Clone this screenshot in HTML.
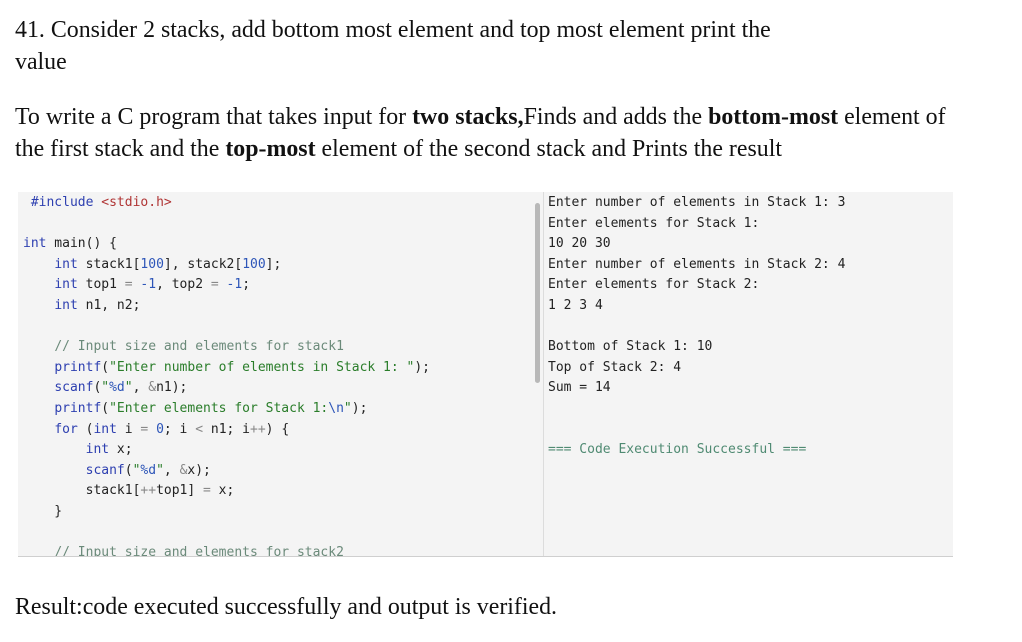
<!DOCTYPE html>
<html><head><meta charset="utf-8"><style>
body{margin:0;width:1022px;height:642px;background:#fff;overflow:hidden;position:relative;font-family:"Liberation Serif",serif;color:#111}
.t{position:absolute;left:15px;font-size:23.9px;line-height:32px;white-space:nowrap}
.panel{position:absolute;left:18px;top:192px;width:935px;height:364px;background:#f4f4f4;border-bottom:1px solid #cfcfcf;overflow:hidden}
.code{position:absolute;left:5px;top:1px;font-family:"DejaVu Sans Mono","Liberation Mono",monospace;font-size:13px;line-height:20.6px;white-space:pre;color:#222}
.out{position:absolute;left:530px;top:1px;font-family:"DejaVu Sans Mono","Liberation Mono",monospace;font-size:13px;line-height:20.6px;white-space:pre;color:#222}
.div{position:absolute;left:525px;top:0;width:1px;height:364px;background:#dcdcdc}
.sb{position:absolute;left:517px;top:11px;width:5px;height:180px;background:#b8b8b8;border-radius:3px}
.k{color:#2d3fb0}.s{color:#2a7d2a}.c{color:#6b8a7a}.n{color:#2d55b8}.p{color:#b03535}.o{color:#888}
.g{color:#4f8a72}
</style></head><body>
<div class="t" style="top:14px">41. Consider 2 stacks, add bottom most element and top most element print the</div>
<div class="t" style="top:46px">value</div>
<div class="t" style="top:101px">To write a C program that takes input for <b>two stacks,</b>Finds and adds the <b>bottom-most</b> element of</div>
<div class="t" style="top:133px">the first stack and the <b>top-most</b> element of the second stack and Prints the result</div>
<div class="panel">
<div class="code"> <span class="k">#include</span> <span class="p">&lt;stdio.h&gt;</span>

<span class="k">int</span> main() {
    <span class="k">int</span> stack1[<span class="n">100</span>], stack2[<span class="n">100</span>];
    <span class="k">int</span> top1 <span class="o">=</span> <span class="n">-1</span>, top2 <span class="o">=</span> <span class="n">-1</span>;
    <span class="k">int</span> n1, n2;

    <span class="c">// Input size and elements for stack1</span>
    <span class="k">printf</span>(<span class="s">"Enter number of elements in Stack 1: "</span>);
    <span class="k">scanf</span>(<span class="s">"<span class="n">%d</span>"</span>, <span class="o">&amp;</span>n1);
    <span class="k">printf</span>(<span class="s">"Enter elements for Stack 1:<span class="n">\n</span>"</span>);
    <span class="k">for</span> (<span class="k">int</span> i <span class="o">=</span> <span class="n">0</span>; i <span class="o">&lt;</span> n1; i<span class="o">++</span>) {
        <span class="k">int</span> x;
        <span class="k">scanf</span>(<span class="s">"<span class="n">%d</span>"</span>, <span class="o">&amp;</span>x);
        stack1[<span class="o">++</span>top1] <span class="o">=</span> x;
    }

    <span class="c">// Input size and elements for stack2</span></div>
<div class="sb"></div>
<div class="div"></div>
<div class="out">Enter number of elements in Stack 1: 3
Enter elements for Stack 1:
10 20 30
Enter number of elements in Stack 2: 4
Enter elements for Stack 2:
1 2 3 4

Bottom of Stack 1: 10
Top of Stack 2: 4
Sum = 14


<span class="g">=== Code Execution Successful ===</span></div>
</div>
<div class="t" style="top:591px">Result:code executed successfully and output is verified.</div>
</body></html>
